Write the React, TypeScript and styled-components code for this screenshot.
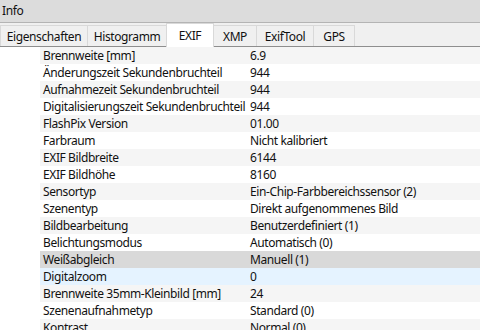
import React from 'react';
import styled, { createGlobalStyle } from 'styled-components';

const GlobalStyle = createGlobalStyle`
  body {
    margin: 0;
    background: #ffffff;
    font-family: 'Noto Sans', 'Open Sans', sans-serif;
    font-size: 12px;
    letter-spacing: -0.4px;
    color: #111;
  }
`;

const tabs = [
  { label: 'Eigenschaften', width: 88 },
  { label: 'Histogramm', width: 80 },
  { label: 'EXIF', width: 48, active: true },
  { label: 'XMP', width: 44 },
  { label: 'ExifTool', width: 58 },
  { label: 'GPS', width: 42 },
];

const rows = [
  ['Brennweite [mm]', '6.9'],
  ['Änderungszeit Sekundenbruchteil', '944'],
  ['Aufnahmezeit Sekundenbruchteil', '944'],
  ['Digitalisierungszeit Sekundenbruchteil', '944'],
  ['FlashPix Version', '01.00'],
  ['Farbraum', 'Nicht kalibriert'],
  ['EXIF Bildbreite', '6144'],
  ['EXIF Bildhöhe', '8160'],
  ['Sensortyp', 'Ein-Chip-Farbbereichssensor (2)'],
  ['Szenentyp', 'Direkt aufgenommenes Bild'],
  ['Bildbearbeitung', 'Benutzerdefiniert (1)'],
  ['Belichtungsmodus', 'Automatisch (0)'],
  ['Weißabgleich', 'Manuell (1)'],
  ['Digitalzoom', '0'],
  ['Brennweite 35mm-Kleinbild [mm]', '24'],
  ['Szenenaufnahmetyp', 'Standard (0)'],
  ['Kontrast', 'Normal (0)'],
];

const SELECTED = 12;
const HOVER = 13;

function App() {
  return (
    <Window>
      <GlobalStyle />
      <TitleBar>Info</TitleBar>
      <TabBar>
        {tabs.map((t) => (
          <Tab key={t.label} $width={t.width} $active={!!t.active}>
            {t.label}
          </Tab>
        ))}
      </TabBar>
      <List>
        {rows.map(([name, value], i) => {
          const state = i === SELECTED ? 'selected' : i === HOVER ? 'hover' : i % 2 === 0 ? 'odd' : 'even';
          return (
            <Row key={name}>
              <Indent />
              <RowBody $state={state}>
                <NameCell>{name}</NameCell>
                <ValueCell>{value}</ValueCell>
              </RowBody>
            </Row>
          );
        })}
      </List>
    </Window>
  );
}

export default App;

const Window = styled.div`
  width: 480px;
  height: 330px;
  overflow: hidden;
  display: flex;
  flex-direction: column;
`;

const TitleBar = styled.div`
  height: 22px;
  line-height: 22px;
  padding-left: 2px;
  background: #dcdcdc;
  border-bottom: 1px solid #b4b4b4;
  flex-shrink: 0;
`;

const TabBar = styled.div`
  height: 23px;
  display: flex;
  align-items: flex-end;
  background: #f0f0f0;
  border-bottom: 1px solid #8e8e8e;
  flex-shrink: 0;
`;

const Tab = styled.div<{ $width: number; $active: boolean }>`
  box-sizing: border-box;
  width: ${(p) => p.$width}px;
  height: ${(p) => (p.$active ? 24 : 21)}px;
  margin-bottom: ${(p) => (p.$active ? -1 : 0)}px;
  display: flex;
  align-items: center;
  justify-content: center;
  background: ${(p) => (p.$active ? '#ffffff' : '#f0f0f0')};
  border: 1px solid #d9d9d9;
  border-bottom: none;
  margin-left: -1px;
  position: relative;
  z-index: ${(p) => (p.$active ? 1 : 0)};
  &:first-child {
    margin-left: 0;
  }
`;

const List = styled.div`
  display: flex;
  flex-direction: column;
`;

const Row = styled.div`
  display: flex;
  height: 17px;
  line-height: 17px;
`;

const Indent = styled.div`
  width: 40px;
  flex-shrink: 0;
  background: #ffffff;
`;

const rowColors: Record<string, string> = {
  odd: '#f5f5f5',
  even: '#ffffff',
  selected: '#d9d9d9',
  hover: '#e5f3ff',
};

const RowBody = styled.div<{ $state: string }>`
  flex: 1;
  display: flex;
  background: ${(p) => rowColors[p.$state]};
  white-space: nowrap;
`;

const NameCell = styled.div`
  width: 207px;
  padding-left: 3px;
  box-sizing: border-box;
  overflow: hidden;
`;

const ValueCell = styled.div`
  padding-left: 3px;
`;
